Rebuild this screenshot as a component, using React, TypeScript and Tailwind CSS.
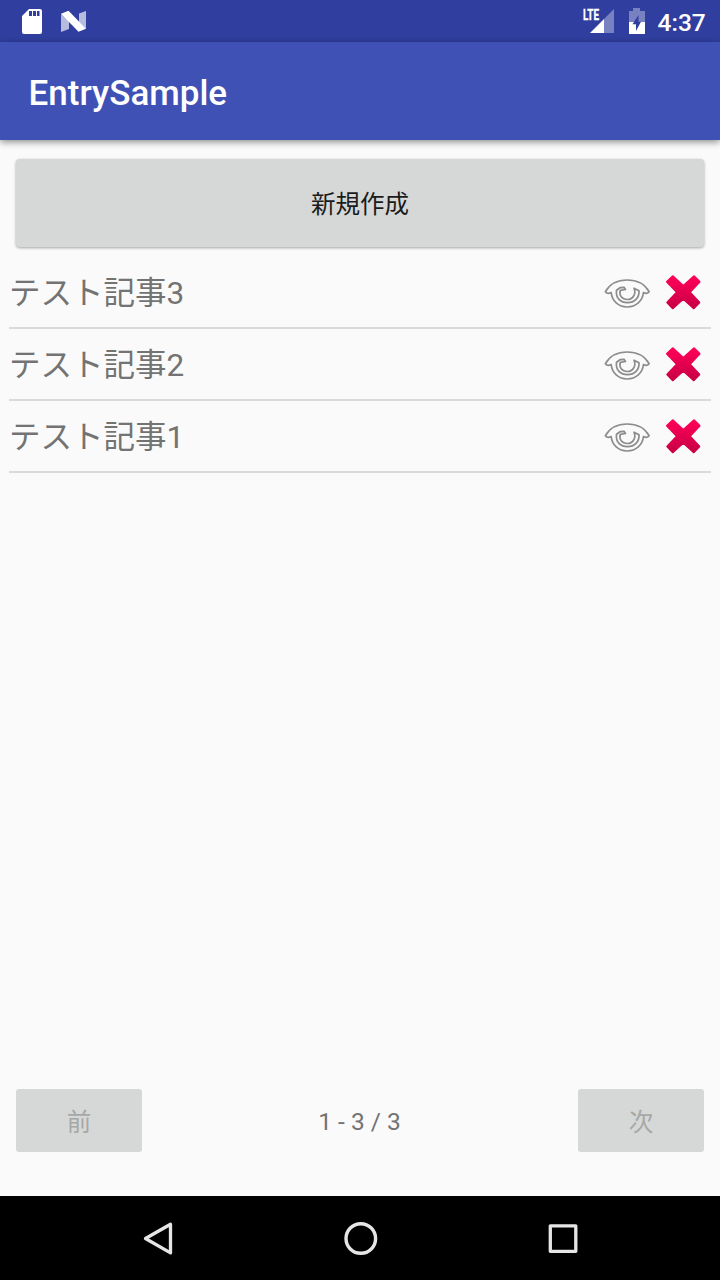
import React from "react";

interface Entry {
  id: number;
  title: string;
}

const entries: Entry[] = [
  { id: 3, title: "テスト記事3" },
  { id: 2, title: "テスト記事2" },
  { id: 1, title: "テスト記事1" },
];

const StatusBar: React.FC = () => (
  <div className="flex h-[42px] items-start justify-between bg-[#303f9f] text-white">
    <div className="flex pl-[20px]">
      <svg width="24" height="42" viewBox="0 0 24 42">
        <path
          fill="#fff"
          fillRule="evenodd"
          d="M9 9h11a2 2 0 0 1 2 2v21a2 2 0 0 1-2 2H4a2 2 0 0 1-2-2V16zM9 11v5h3v-5zM13 11v5h3v-5zM17 11v5h2.5v-5z"
        />
      </svg>
      <svg className="ml-[16px]" width="28" height="42" viewBox="0 0 28 42">
        <path fill="#fff" fillOpacity=".65" d="M1 14l8 7v8l-8 3zM26 11v18l-7-7v-8.500z" />
        <path fill="#fff" d="M1 13.800l7.500-3L26 28.700l-7.500 3z" />
      </svg>
    </div>
    <div className="flex pr-[14px]">
      <svg width="34" height="42" viewBox="0 0 34 42">
        <path fill="#fff" fillOpacity=".35" d="M21 19L31 9v24H21z" />
        <path fill="#fff" d="M7 33l14-14v14z" />
        <text x="0" y="20" fill="#fff" stroke="#fff" strokeWidth=".3" fontFamily="Roboto, sans-serif" fontSize="14.5" fontWeight="700" textLength="16" lengthAdjust="spacingAndGlyphs">
          LTE
        </text>
      </svg>
      <svg className="ml-[11px]" width="18" height="42" viewBox="0 0 18 42">
        <path fill="#fff" fillOpacity=".35" d="M5 8h7v3h5v11H1V11h4z" />
        <path fill="#fff" d="M1 22h16v12H1z" />
        <path fill="#303f9f" d="M10.500 15L4.500 24.300H8V31L13 21.700H10.500z" />
      </svg>
      <span className="ml-[11.500px] w-[48.500px] pt-[4px] text-[24.5px] leading-[37px] font-medium">4:37</span>
    </div>
  </div>
);

const EyeIcon: React.FC = () => (
  <svg width="54" height="44" viewBox="0 0 54 44" fill="none" stroke="#8c8c8c" strokeWidth="1.7" strokeLinejoin="round" strokeLinecap="round">
    <path d="M5.300 21.800C10 13.500 18 10 27.200 10S44.500 13.500 49.200 21.800C48 23.200 45.800 24 43.500 22.500C42.500 31 36 37 27.200 37S12 31 11.200 22.500C8.700 24 6.500 23.200 5.300 21.800z" />
    <path d="M16.500 20.300L20 17.700L24 17.300L25.500 19.500L20.300 20.300C18.800 25.500 22 29.500 27.200 29.500C33 29.500 36.500 24 34 18.200L39 20.800C39.500 28 34.500 32.700 27.500 32.700S15.500 28 16.500 20.300z" />
  </svg>
);

const DeleteIcon: React.FC = () => (
  <svg width="40" height="44" viewBox="0 0 40 44">
    <defs>
      <linearGradient id="cross" x1="0" y1="0" x2="0" y2="1">
        <stop offset="0" stopColor="#ff0059" />
        <stop offset="1" stopColor="#c80045" />
      </linearGradient>
    </defs>
    <path
      fill="url(#cross)"
      stroke="url(#cross)"
      strokeWidth="2"
      strokeLinejoin="round"
      d="M4 11.800L9.800 6.300L20.300 16L31 6.300L36.500 11.800L26.700 22.300L36.300 32.500L30.700 38.200L20.300 28.700L9.800 38.200L4.300 32.500L14 22.300z"
    />
  </svg>
);

const EntryRow: React.FC<{ entry: Entry }> = ({ entry }) => (
  <li className="flex h-[72px] items-start border-b-2 border-[#dadada]">
    <span className="flex-1 pt-[2px] text-[31.5px] leading-[70px] text-[#737373]">{entry.title}</span>
    <button className="mt-[13px]" aria-label="表示">
      <EyeIcon />
    </button>
    <button className="mr-[8px] ml-[9px] mt-[13px]" aria-label="削除">
      <DeleteIcon />
    </button>
  </li>
);

const PageButton: React.FC<{ label: string }> = ({ label }) => (
  <button disabled className="h-[63px] w-[126px] rounded-[3px] bg-[#d6d8d7] pt-[5px] text-[24.5px] text-[#a6a8a7]">
    {label}
  </button>
);

const NavBar: React.FC = () => (
  <div className="flex h-[84px] items-center justify-between bg-black pr-[137px] pl-[138px]">
    <svg width="40" height="40" viewBox="0 0 40 40" fill="none" stroke="#e6e6e6" strokeWidth="3.300" strokeLinejoin="round">
      <path d="M7.500 20.500L32.500 6.300v28.600z" />
    </svg>
    <svg width="40" height="40" viewBox="0 0 40 40" fill="none" stroke="#e6e6e6" strokeWidth="3.400">
      <circle cx="19.800" cy="20.500" r="14.800" />
    </svg>
    <svg width="40" height="40" viewBox="0 0 40 40" fill="none" stroke="#e6e6e6" strokeWidth="3.300" strokeLinejoin="round">
      <rect x="7.300" y="7.800" width="25.500" height="25.500" />
    </svg>
  </div>
);

const App: React.FC = () => {
  return (
    <div className="flex h-[1280px] w-[720px] flex-col bg-[#fafafa] font-[Roboto,'Noto_Sans_CJK_JP',sans-serif]">
      <StatusBar />
      <header className="flex h-[98px] items-center bg-[#3f51b5] pt-[6px] pl-[28.500px] shadow-[0_2px_7px_rgba(0,0,0,0.45)]">
        <h1 className="text-[35px] font-medium text-white">EntrySample</h1>
      </header>
      <main className="flex flex-1 flex-col pt-[19px] pb-[44px]">
        <button className="mx-[16px] h-[88px] rounded-[4px] bg-[#d6d8d7] pt-[4px] text-[24.5px] text-[#1b1b1b] shadow-[0_1px_3px_rgba(0,0,0,0.35)]">
          新規作成
        </button>
        <ul className="mx-[9px] mt-[10px]">
          {entries.map((entry) => (
            <EntryRow key={entry.id} entry={entry} />
          ))}
        </ul>
        <div className="mx-[16px] mt-auto flex items-center justify-between">
          <PageButton label="前" />
          <span className="pt-[3px] pr-px text-[24.5px] text-[#737373]">1 - 3 / 3</span>
          <PageButton label="次" />
        </div>
      </main>
      <NavBar />
    </div>
  );
};

export default App;
